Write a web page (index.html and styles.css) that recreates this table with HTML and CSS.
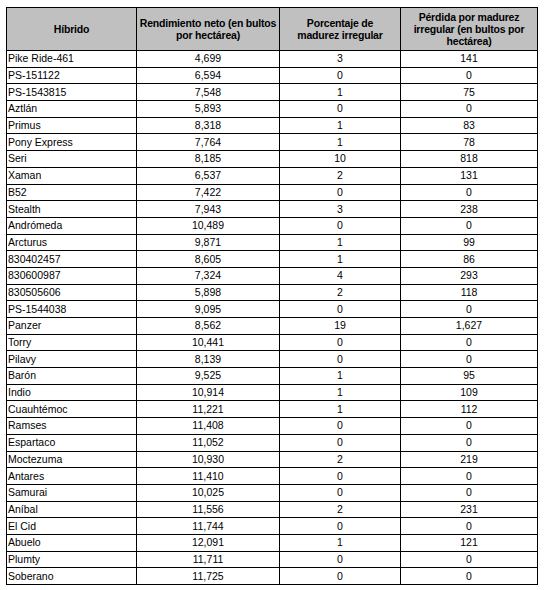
FILE: index.html
```html
<!DOCTYPE html>
<html lang="es">
<head>
<meta charset="utf-8">
<title>Híbridos</title>
<link rel="stylesheet" href="styles.css">
</head>
<body>
<table class="data">
<colgroup><col class="c1"><col class="c2"><col class="c3"><col class="c4"></colgroup>
<thead>
<tr><th>Híbrido</th><th>Rendimiento neto (en bultos por hectárea)</th><th class="narrow">Porcentaje de madurez irregular</th><th>Pérdida por madurez irregular (en bultos por hectárea)</th></tr>
</thead>
<tbody>
<tr><td>Pike Ride-461</td><td>4,699</td><td>3</td><td>141</td></tr>
<tr><td>PS-151122</td><td>6,594</td><td>0</td><td>0</td></tr>
<tr><td>PS-1543815</td><td>7,548</td><td>1</td><td>75</td></tr>
<tr><td>Aztlán</td><td>5,893</td><td>0</td><td>0</td></tr>
<tr><td>Primus</td><td>8,318</td><td>1</td><td>83</td></tr>
<tr><td>Pony Express</td><td>7,764</td><td>1</td><td>78</td></tr>
<tr><td>Seri</td><td>8,185</td><td>10</td><td>818</td></tr>
<tr><td>Xaman</td><td>6,537</td><td>2</td><td>131</td></tr>
<tr><td>B52</td><td>7,422</td><td>0</td><td>0</td></tr>
<tr><td>Stealth</td><td>7,943</td><td>3</td><td>238</td></tr>
<tr><td>Andrómeda</td><td>10,489</td><td>0</td><td>0</td></tr>
<tr><td>Arcturus</td><td>9,871</td><td>1</td><td>99</td></tr>
<tr><td>830402457</td><td>8,605</td><td>1</td><td>86</td></tr>
<tr><td>830600987</td><td>7,324</td><td>4</td><td>293</td></tr>
<tr><td>830505606</td><td>5,898</td><td>2</td><td>118</td></tr>
<tr><td>PS-1544038</td><td>9,095</td><td>0</td><td>0</td></tr>
<tr><td>Panzer</td><td>8,562</td><td>19</td><td>1,627</td></tr>
<tr><td>Torry</td><td>10,441</td><td>0</td><td>0</td></tr>
<tr><td>Pilavy</td><td>8,139</td><td>0</td><td>0</td></tr>
<tr><td>Barón</td><td>9,525</td><td>1</td><td>95</td></tr>
<tr><td>Indio</td><td>10,914</td><td>1</td><td>109</td></tr>
<tr><td>Cuauhtémoc</td><td>11,221</td><td>1</td><td>112</td></tr>
<tr><td>Ramses</td><td>11,408</td><td>0</td><td>0</td></tr>
<tr><td>Espartaco</td><td>11,052</td><td>0</td><td>0</td></tr>
<tr><td>Moctezuma</td><td>10,930</td><td>2</td><td>219</td></tr>
<tr><td>Antares</td><td>11,410</td><td>0</td><td>0</td></tr>
<tr><td>Samurai</td><td>10,025</td><td>0</td><td>0</td></tr>
<tr><td>Aníbal</td><td>11,556</td><td>2</td><td>231</td></tr>
<tr><td>El Cid</td><td>11,744</td><td>0</td><td>0</td></tr>
<tr><td>Abuelo</td><td>12,091</td><td>1</td><td>121</td></tr>
<tr><td>Plumty</td><td>11,711</td><td>0</td><td>0</td></tr>
<tr><td>Soberano</td><td>11,725</td><td>0</td><td>0</td></tr>
</tbody>
</table>
</body>
</html>
```
FILE: styles.css
```css
html, body {
  margin: 0;
  padding: 0;
  background: #ffffff;
}
body {
  padding: 7px 0 0 6px;
  font-family: "Liberation Sans", Arial, sans-serif;
  font-size: 10.5px;
  color: #000000;
}
.data {
  border-collapse: collapse;
  table-layout: fixed;
  width: 531px;
}
.c1 { width: 130px; }
.c2 { width: 143px; }
.c3 { width: 121px; }
.c4 { width: 137px; }
.data th, .data td {
  border: 1px solid #000000;
  padding: 0 2px;
  line-height: 13px;
}
.data th {
  background: #c0c0c0;
  font-weight: bold;
  font-size: 10.5px;
  letter-spacing: -0.2px;
  line-height: 12px;
  text-align: center;
  vertical-align: middle;
  height: 42px;
  padding: 0 1px;
}
.data th.narrow {
  padding: 0 12px;
}
.data td {
  height: 15.7px;
  text-align: center;
  vertical-align: middle;
}
.data td:first-child {
  text-align: left;
  padding-left: 1px;
}
```
